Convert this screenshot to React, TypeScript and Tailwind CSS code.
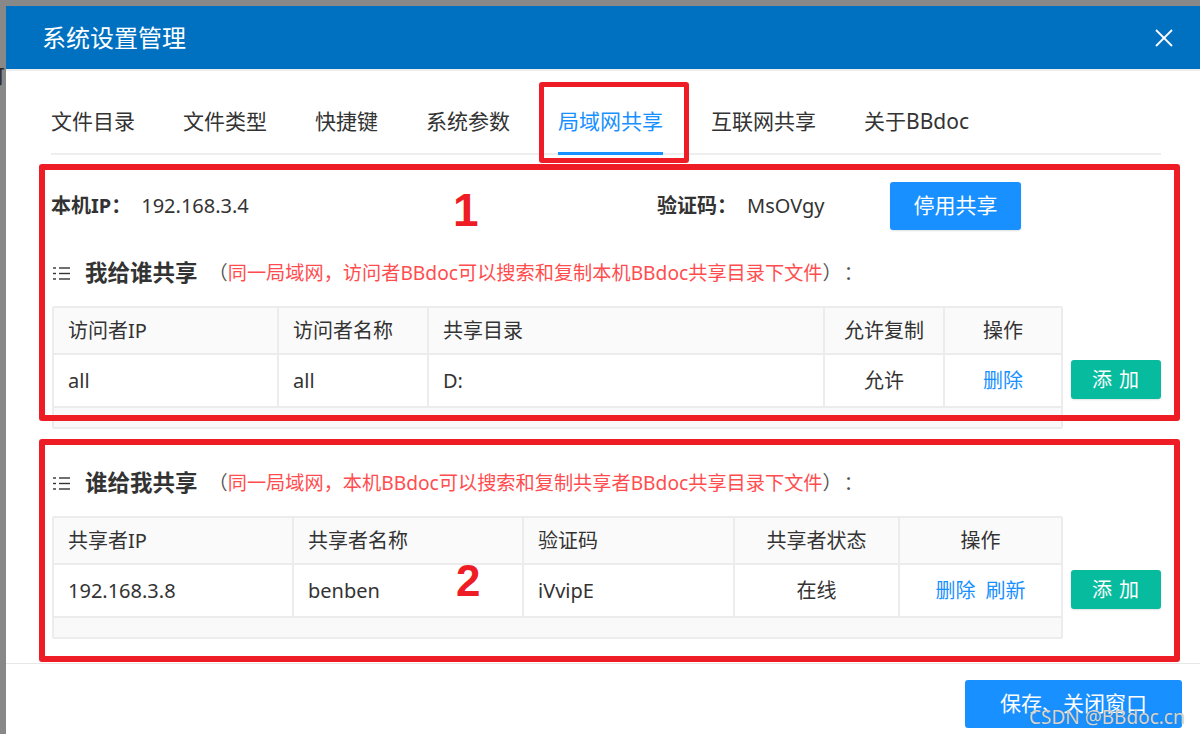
import React from "react";

type Col = { title: string; w: string; center?: boolean };
type Cell = { text: string; links?: string[] };

const tabs = ["文件目录", "文件类型", "快捷键", "系统参数", "局域网共享", "互联网共享", "关于BBdoc"];

const outCols: Col[] = [
  { title: "访问者IP", w: "w-[223px]" },
  { title: "访问者名称", w: "w-[150px]" },
  { title: "共享目录", w: "w-[396px]" },
  { title: "允许复制", w: "w-[120px]", center: true },
  { title: "操作", w: "w-[118px]", center: true },
];
const outRow: Cell[] = [{ text: "all" }, { text: "all" }, { text: "D:" }, { text: "允许" }, { text: "", links: ["删除"] }];

const inCols: Col[] = [
  { title: "共享者IP", w: "w-[238px]" },
  { title: "共享者名称", w: "w-[230px]" },
  { title: "验证码", w: "w-[211px]" },
  { title: "共享者状态", w: "w-[165px]", center: true },
  { title: "操作", w: "w-[163px]", center: true },
];
const inRow: Cell[] = [
  { text: "192.168.3.8" },
  { text: "benben" },
  { text: "iVvipE" },
  { text: "在线" },
  { text: "", links: ["删除", "刷新"] },
];

const ListIcon = () => (
  <svg width="17" height="15" viewBox="0 0 17 15" fill="none" stroke="#333" strokeWidth="1.4">
    <line x1="0" y1="2" x2="3" y2="2" />
    <line x1="6" y1="2" x2="17" y2="2" />
    <line x1="0" y1="7.5" x2="3" y2="7.5" />
    <line x1="6" y1="7.5" x2="17" y2="7.5" />
    <line x1="0" y1="13" x2="3" y2="13" />
    <line x1="6" y1="13" x2="17" y2="13" />
  </svg>
);

const Heading = ({ title, hint }: { title: string; hint: string }) => (
  <div className="h-[30px] flex items-center pl-[2px]">
    <ListIcon />
    <span className="ml-[15px] text-[22.5px] font-bold text-[#333]">{title}</span>
    <span className="ml-[11px] text-[19.2px] text-[#555]">（</span>
    <span className="text-[19.2px] text-[#ff4d4f]">{hint}</span>
    <span className="text-[19.2px] text-[#555]">）</span>
    <span className="ml-[2px] text-[19.2px] text-[#555]">：</span>
  </div>
);

const ShareTable = ({ cols, row }: { cols: Col[]; row: Cell[] }) => (
  <div className="flex gap-[8px] ml-[1px]">
    <div className="w-[1011px] border-2 border-[#ececec] rounded-[2px] text-[20px] text-[#333]">
      <div className="flex h-[45px] bg-[#fafafa]">
        {cols.map((c, i) => (
          <div
            key={c.title}
            className={`${c.w} flex items-center ${c.center ? "justify-center" : "pl-[14px]"} ${i > 0 ? "border-l-2 border-[#ececec]" : ""}`}
          >
            {c.title}
          </div>
        ))}
      </div>
      <div className="flex h-[53px] border-t-2 border-[#ececec] bg-white">
        {cols.map((c, i) => (
          <div
            key={c.title}
            className={`${c.w} flex items-center ${c.center ? "justify-center" : "pl-[14px]"} ${i > 0 ? "border-l-2 border-[#ececec]" : ""}`}
          >
            {row[i].links ? (
              <div className="flex gap-[10px] text-[#1890ff]">
                {row[i].links!.map((l) => (
                  <span key={l}>{l}</span>
                ))}
              </div>
            ) : (
              row[i].text
            )}
          </div>
        ))}
      </div>
      <div className="h-[21px] border-t-2 border-[#ececec] bg-[#f9f9f9]" />
    </div>
    <button className="mt-[54px] w-[90px] h-[39px] rounded-[3px] bg-[#07bc9e] text-white text-[20px] tracking-[1px] shadow-[0_1px_2px_rgba(0,0,0,0.12)]">
      添 加
    </button>
  </div>
);

export default function App() {
  return (
    <div className="relative w-[1200px] h-[734px] overflow-hidden bg-[#888888] pt-[6px] pl-[6px] font-['Noto_Sans','Noto_Sans_CJK_SC',sans-serif]">
      {/* page behind the dialog */}
      <span className="absolute left-[-15px] top-[62px] text-[20px] text-[#2a2a2a]">可</span>

      <div className="relative w-[1200px] h-[760px] bg-white">
        <div className="h-[63px] bg-[#0071c1] flex items-center justify-between pl-[36px] pr-[33px]">
          <span className="text-[24px] text-white">系统设置管理</span>
          <svg width="18" height="18" viewBox="0 0 18 18" stroke="white" strokeWidth="1.8">
            <line x1="1" y1="1" x2="17" y2="17" />
            <line x1="17" y1="1" x2="1" y2="17" />
          </svg>
        </div>
        <div className="h-[2px] bg-[#eeeeee]" />

        <div className="px-[45px]">
          <div className="flex gap-[48px] pt-[21px] border-b-2 border-[#eeeeee]">
            {tabs.map((t, i) => (
              <div
                key={t}
                className={`h-[63px] -mb-[2px] flex items-center border-b-[3px] text-[21px] ${i === 4 ? "border-[#1890ff] text-[#1890ff]" : "border-transparent text-[#333]"}`}
              >
                {t}
              </div>
            ))}
          </div>

          <div className="mt-[27px] h-[48px] flex items-center text-[20px] text-[#333]">
            <div className="w-[606px] flex items-center">
              <span className="font-bold">本机IP：</span>
              <span className="ml-[10px]">192.168.3.4</span>
            </div>
            <div className="w-[233px] flex items-center">
              <span className="font-bold">验证码：</span>
              <span className="ml-[10px]">MsOVgy</span>
            </div>
            <button className="w-[131px] h-[48px] rounded-[3px] bg-[#1890ff] text-white text-[21px] shadow-[0_1px_2px_rgba(0,0,0,0.12)]">
              停用共享
            </button>
          </div>

          <div className="mt-[28px]">
            <Heading title="我给谁共享" hint="同一局域网，访问者BBdoc可以搜索和复制本机BBdoc共享目录下文件" />
          </div>
          <div className="mt-[18px]">
            <ShareTable cols={outCols} row={outRow} />
          </div>

          <div className="mt-[39px]">
            <Heading title="谁给我共享" hint="同一局域网，本机BBdoc可以搜索和复制共享者BBdoc共享目录下文件" />
          </div>
          <div className="mt-[18px] pb-[24px]">
            <ShareTable cols={inCols} row={inRow} />
          </div>
        </div>

        <div className="border-t border-[#e8e8e8] pt-[16px] pr-[24px] flex justify-end">
          <button className="w-[217px] h-[48px] rounded-[3px] bg-[#1890ff] text-white text-[21px]">
            保存、关闭窗口
          </button>
        </div>
      </div>

      {/* annotation overlays */}
      <div className="absolute left-[539px] top-[82px] w-[150px] h-[81px] border-[5px] border-[#ee1c25] rounded-[3px]" />
      <div className="absolute left-[39px] top-[164px] w-[1141px] h-[257px] border-[6px] border-[#ee1c25] rounded-[3px]" />
      <div className="absolute left-[39px] top-[439px] w-[1141px] h-[223px] border-[6px] border-[#ee1c25] rounded-[3px]" />
      <span className="absolute left-[453px] top-[187px] text-[46px] leading-none font-bold text-[#ee1c25] font-['Liberation_Sans',sans-serif]">
        1
      </span>
      <span className="absolute left-[456px] top-[559px] text-[44px] leading-none font-bold text-[#ee1c25] font-['Liberation_Sans',sans-serif]">
        2
      </span>
      <span className="absolute left-[1029px] top-[703px] text-[19px] leading-[28px] text-[#d6d6d6] [text-shadow:0_0_1px_rgba(80,80,80,0.6)] font-['Noto_Sans',sans-serif]">
        CSDN @BBdoc.cn
      </span>
    </div>
  );
}
